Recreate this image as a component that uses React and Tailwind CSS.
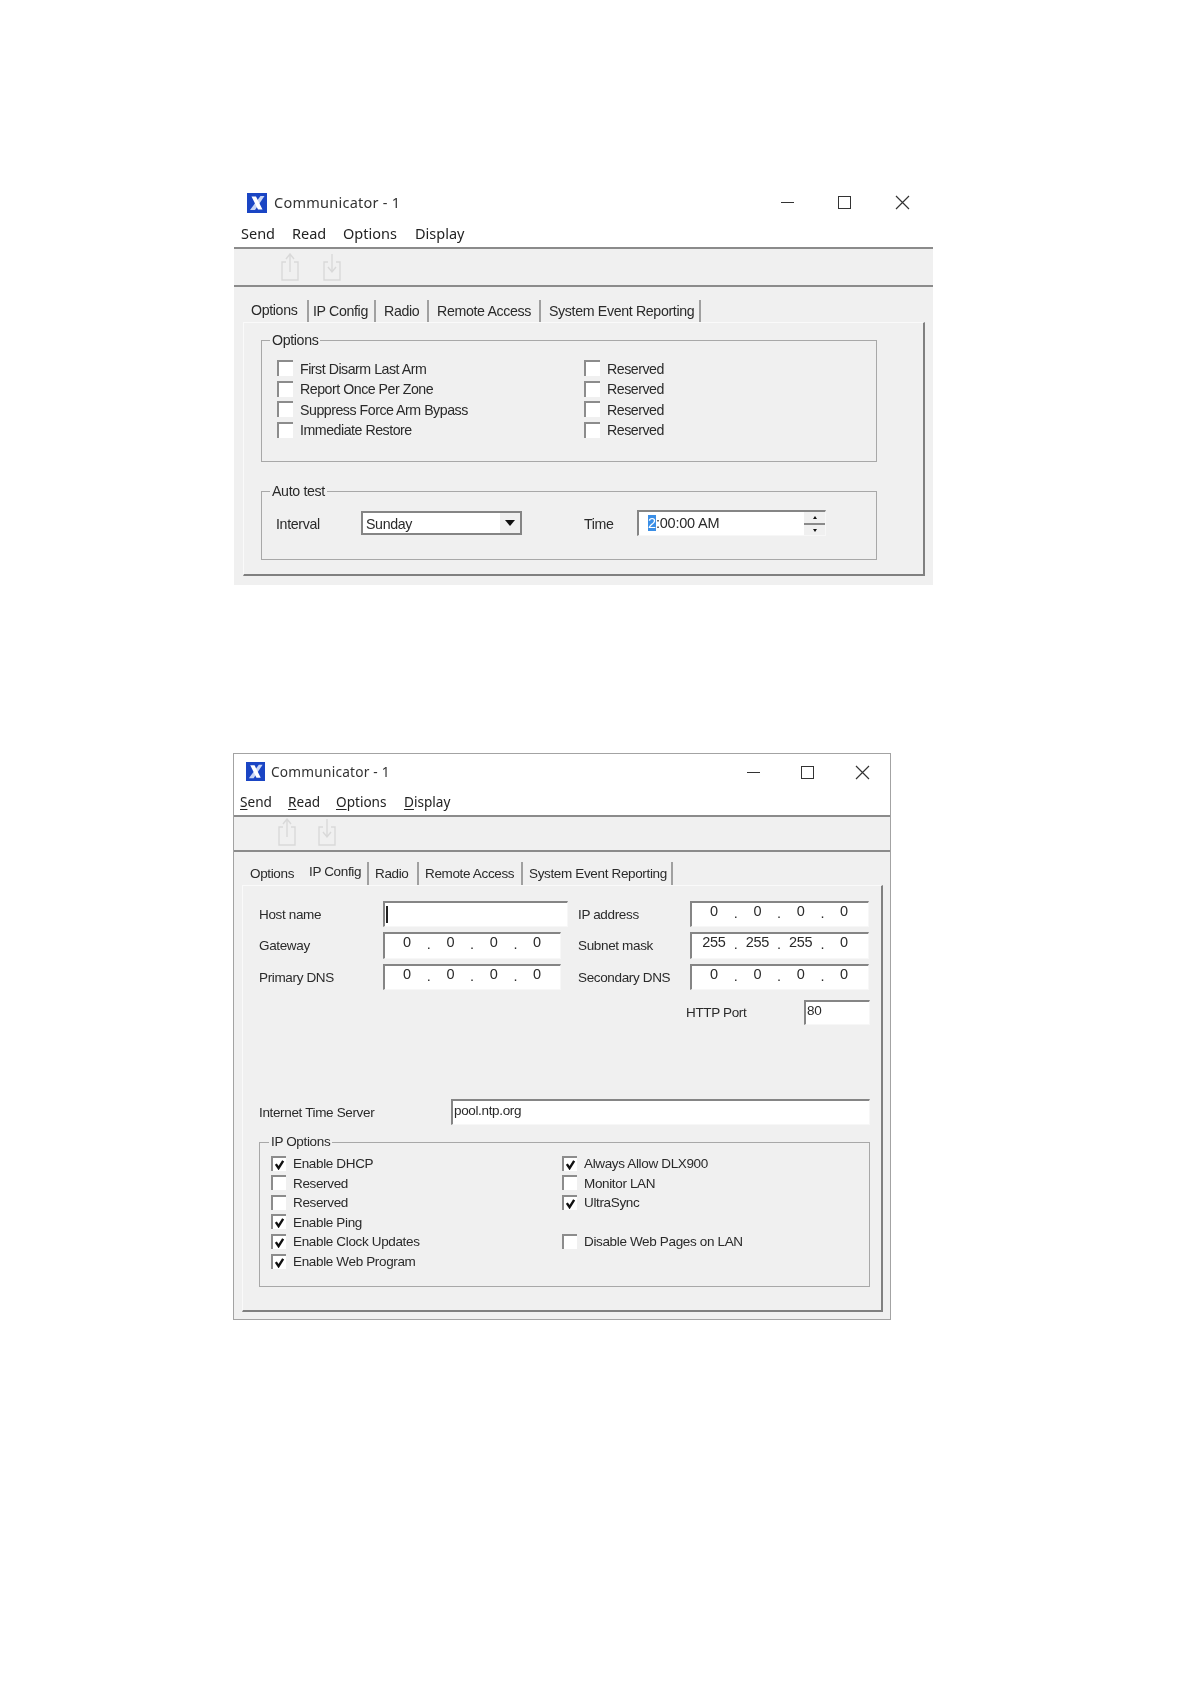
import React from "react";

const sans = "font-['Liberation_Sans',Arial,sans-serif]";
const ui = "font-['Noto_Sans','Open_Sans',sans-serif]";

function Logo({ size }) {
    return (
        <svg width={size} height={size} viewBox="0 0 20 20" className="shrink-0">
            <rect width="20" height="20" fill="#1a45c4" />
            <path d="M3 17 L13.5 3 L17.5 3 L8 17 Z" fill="#c9d6f5" />
            <path d="M4.5 3.5 L9 3.5 L15.5 16.5 L11 16.5 Z" fill="#ffffff" />
        </svg>
    );
}

function ToolIcon({ down }) {
    return (
        <svg width="20" height="28" viewBox="0 0 20 28" fill="none" stroke="#d9d9d9" strokeWidth="1.4">
            <path d="M6 9 H2 V27 H18 V9 H14" />
            {down ? <path d="M10 1 V18 M6 14 L10 19 L14 14" /> : <path d="M10 19 V2 M6 6 L10 1 L14 6" />}
        </svg>
    );
}

function WinButtons({ gaps }) {
    return (
        <div className={`flex items-center ${gaps}`}>
            <div className="w-[13px] h-[1px] bg-[#333]" />
            <div className="w-[13px] h-[13px] border-[1.5px] border-[#333]" />
            <svg width="15" height="15" viewBox="0 0 15 15" stroke="#333" strokeWidth="1.2"><path d="M1 1 L14 14 M14 1 L1 14" /></svg>
        </div>
    );
}

function Check({ label, checked, rowH, box = "w-[16px] h-[16px]", gap = "ml-[7px]" }) {
    return (
        <div className={`flex items-center text-[#2a2a2a] ${rowH}`}>
            <div className={`-mt-[2px] bg-white border-t-2 border-l-2 border-[#8c8c8c] flex items-center justify-center shrink-0 ${box}`}>
                {checked && (
                    <svg width="11" height="11" viewBox="0 0 12 12" fill="none" stroke="#111" strokeWidth="2.6"><path d="M2 5.5 L5 10 L10 2" /></svg>
                )}
            </div>
            <span className={`whitespace-nowrap ${gap}`}>{label}</span>
        </div>
    );
}

function Tab({ label, pl, w, raised, plain, top = "pt-[2px]" }) {
    return (
        <div className={`h-full flex items-start text-[#2a2a2a] whitespace-nowrap ${plain ? "" : "border-r-2 border-[#a0a0a0]"} ${pl} ${w} ${raised ? "pt-[0px]" : top}`}>
            {label}
        </div>
    );
}

function Sunken({ className, children }) {
    return <div className={`bg-white border-t-2 border-l-2 border-[#858585] border-r border-b border-r-[#f7f7f7] border-b-[#f7f7f7] ${className}`}>{children}</div>;
}

function IpField({ parts, w, h }) {
    return (
        <Sunken className={`flex items-start pl-[7px] text-[14.5px] leading-[17px] text-[#2a2a2a] ${w} ${h}`}>
            {parts.map((p, i) => (
                <React.Fragment key={i}>
                    <span className="w-[30px] text-center tracking-[-0.3px]">{p}</span>
                    {i < 3 && <span className="w-[13.3px] text-center leading-[20px]">.</span>}
                </React.Fragment>
            ))}
        </Sunken>
    );
}

function FirstWindow() {
    const left = ["First Disarm Last Arm", "Report Once Per Zone", "Suppress Force Arm Bypass", "Immediate Restore"];
    return (
        <div className={`w-[699px] ${sans} text-[14.2px] tracking-[-0.48px]`}>
            <div className={`h-[29px] flex items-center pl-[13px] pr-[23px] justify-between tracking-normal ${ui}`}>
                <div className="flex items-center">
                    <Logo size={20} />
                    <span className="ml-[7px] text-[14.5px] tracking-[0.25px] text-[#333]">Communicator - 1</span>
                </div>
                <WinButtons gaps="gap-[44px]" />
            </div>
            <div className={`h-[30px] pt-[4px] flex items-center pl-[7px] text-[14.5px] tracking-normal text-[#222] ${ui}`}>
                <span className="w-[51px]">Send</span>
                <span className="w-[51px]">Read</span>
                <span className="w-[72px]">Options</span>
                <span>Display</span>
            </div>
            <div className="h-[40px] bg-[#f0f0f0] border-t-2 border-b-2 border-[#8b8b8b] flex items-center pl-[46px] gap-[22px]">
                <ToolIcon />
                <ToolIcon down />
            </div>
            <div className="bg-[#f0f0f0] pl-[9px] pr-[8px] pb-[9px] tracking-[-0.35px]">
                <div className="h-[35px] pt-[13px] flex">
                    <Tab label="Options" pl="pl-[8px]" w="w-[66px]" raised />
                    <Tab label="IP Config" pl="pl-[4px]" w="w-[67px]" top="pt-[1px]" />
                    <Tab label="Radio" pl="pl-[8px]" w="w-[53px]" top="pt-[1px]" />
                    <Tab label="Remote Access" pl="pl-[8px]" w="w-[112px]" top="pt-[1px]" />
                    <Tab label="System Event Reporting" pl="pl-[8px]" w="w-[160px]" top="pt-[1px]" />
                </div>
                <div className="h-[254px] border-r-2 border-b-2 border-r-[#808080] border-b-[#808080] border-t border-l border-t-[#fafafa] border-l-[#fafafa] pl-[17px] pt-[7px] text-[#2a2a2a]">
                    <fieldset className="w-[616px] h-[132px] border border-[#a8a8a8]">
                        <legend className="ml-[8px] px-[2px]">Options</legend>
                        <div className="grid grid-cols-[307px_1fr] pl-[15px] pt-[8px] tracking-[-0.48px]">
                            {left.map((l) => (
                                <React.Fragment key={l}>
                                    <Check label={l} rowH="h-[20.4px]" />
                                    <Check label="Reserved" rowH="h-[20.4px]" />
                                </React.Fragment>
                            ))}
                        </div>
                    </fieldset>
                    <fieldset className="w-[616px] h-[79px] border border-[#a8a8a8] mt-[19px]">
                        <legend className="ml-[8px] px-[2px]">Auto test</legend>
                        <div className="flex items-center pl-[14px] pt-[8px]">
                            <span className="w-[85px] pt-[2px]">Interval</span>
                            <div className="w-[161px] h-[24px] bg-white border-2 border-[#858585] flex items-center justify-between pl-[3px]">
                                <span className="pt-[2px]">Sunday</span>
                                <div className="w-[20px] h-full bg-[#f0f0f0] flex items-center justify-center">
                                    <div className="w-0 h-0 border-l-[5px] border-r-[5px] border-t-[6px] border-l-transparent border-r-transparent border-t-[#111]" />
                                </div>
                            </div>
                            <span className="ml-[62px] w-[53px] pt-[2px]">Time</span>
                            <Sunken className="w-[189px] h-[26px] flex items-center justify-between pl-[9px]">
                                <span className="text-[14.5px] tracking-[-0.2px]"><span className="bg-[#3a8ee6] text-white">2</span>:00:00 AM</span>
                                <div className="w-[21px] h-full flex flex-col bg-[#f0f0f0]">
                                    <div className="flex-1 flex items-center justify-center border-b-2 border-[#8a8a8a]"><div className="w-0 h-0 border-l-[2.5px] border-r-[2.5px] border-b-[3px] border-l-transparent border-r-transparent border-b-[#111]" /></div>
                                    <div className="flex-1 flex items-center justify-center"><div className="w-0 h-0 border-l-[2.5px] border-r-[2.5px] border-t-[3px] border-l-transparent border-r-transparent border-t-[#111]" /></div>
                                </div>
                            </Sunken>
                        </div>
                    </fieldset>
                </div>
            </div>
        </div>
    );
}

function Hotkey({ k, rest, w }) {
    return <span className={w}><span className="underline underline-offset-2">{k}</span>{rest}</span>;
}

function FormRow({ label, lw, children, mt }) {
    return (
        <div className={`flex items-center ${mt}`}>
            <span className={`pt-[2px] ${lw}`}>{label}</span>
            {children}
        </div>
    );
}

function SecondWindow() {
    const rows = [
        ["Enable DHCP", true, "Always Allow DLX900", true],
        ["Reserved", false, "Monitor LAN", false],
        ["Reserved", false, "UltraSync", true],
        ["Enable Ping", true, null, false],
        ["Enable Clock Updates", true, "Disable Web Pages on LAN", false],
        ["Enable Web Program", true, null, false],
    ];
    const box = "w-[15px] h-[15px]";
    return (
        <div className={`w-[658px] h-[567px] border border-[#a3a3a3] ${sans} text-[13.5px] tracking-[-0.35px]`}>
            <div className={`h-[33px] pt-[3px] flex items-center pl-[12px] pr-[20px] justify-between tracking-normal ${ui}`}>
                <div className="flex items-center">
                    <Logo size={19} />
                    <span className="ml-[6px] text-[13.7px] tracking-[0.2px] text-[#333]">Communicator - 1</span>
                </div>
                <WinButtons gaps="gap-[41px]" />
            </div>
            <div className={`h-[28px] pt-[2px] flex items-center pl-[6px] text-[13.6px] tracking-normal text-[#222] ${ui}`}>
                <Hotkey k="S" rest="end" w="w-[48px]" />
                <Hotkey k="R" rest="ead" w="w-[48px]" />
                <Hotkey k="O" rest="ptions" w="w-[68px]" />
                <Hotkey k="D" rest="isplay" />
            </div>
            <div className="h-[37px] bg-[#f0f0f0] border-t-2 border-b-2 border-[#8b8b8b] flex items-center pb-[3px] pl-[43px] gap-[20px]">
                <ToolIcon />
                <ToolIcon down />
            </div>
            <div className="h-[467px] bg-[#f0f0f0] pl-[8px] pr-[7px] pb-[7px] flex flex-col">
                <div className="h-[33px] pt-[10px] flex">
                    <Tab label="Options" pl="pl-[8px]" w="w-[59px]" plain />
                    <Tab label="IP Config" pl="pl-[8px]" w="w-[68px]" raised />
                    <Tab label="Radio" pl="pl-[6px]" w="w-[50px]" />
                    <Tab label="Remote Access" pl="pl-[6px]" w="w-[104px]" />
                    <Tab label="System Event Reporting" pl="pl-[6px]" w="w-[150px]" />
                </div>
                <div className="flex-1 border-r-2 border-b-2 border-r-[#808080] border-b-[#808080] border-t border-l border-t-[#fafafa] border-l-[#fafafa] pl-[16px] pt-[15px] text-[#2a2a2a]">
                    <div className="grid grid-cols-[319px_1fr] gap-y-[5px] items-center">
                        <FormRow label="Host name" lw="w-[124px]">
                            <Sunken className="w-[185px] h-[26px] flex items-center pl-[1px]"><div className="w-[1.5px] h-[17px] bg-[#222]" /></Sunken>
                        </FormRow>
                        <FormRow label="IP address" lw="w-[112px]"><IpField parts={["0", "0", "0", "0"]} w="w-[179px]" h="h-[26px]" /></FormRow>
                        <FormRow label="Gateway" lw="w-[124px]"><IpField parts={["0", "0", "0", "0"]} w="w-[178px]" h="h-[27px]" /></FormRow>
                        <FormRow label="Subnet mask" lw="w-[112px]"><IpField parts={["255", "255", "255", "0"]} w="w-[179px]" h="h-[27px]" /></FormRow>
                        <FormRow label="Primary DNS" lw="w-[124px]"><IpField parts={["0", "0", "0", "0"]} w="w-[178px]" h="h-[26px]" /></FormRow>
                        <FormRow label="Secondary DNS" lw="w-[112px]"><IpField parts={["0", "0", "0", "0"]} w="w-[179px]" h="h-[26px]" /></FormRow>
                    </div>
                    <div className="flex items-center mt-[10px] pl-[427px]">
                        <span className="w-[118px] pt-[2px]">HTTP Port</span>
                        <Sunken className="w-[66px] h-[25px] pl-[1px] leading-[18px]">80</Sunken>
                    </div>
                    <FormRow label="Internet Time Server" lw="w-[192px]" mt="mt-[74px]">
                        <Sunken className="w-[419px] h-[26px] pl-[1px] leading-[20px]">pool.ntp.org</Sunken>
                    </FormRow>
                    <fieldset className="w-[611px] h-[155px] border border-[#a8a8a8] mt-[7px]">
                        <legend className="ml-[9px] px-[2px]">IP Options</legend>
                        <div className="grid grid-cols-[291px_1fr] pl-[11px] pt-[2px]">
                            {rows.map(([a, ac, b, bc], i) => (
                                <React.Fragment key={i}>
                                    <Check label={a} checked={ac} rowH="h-[19.6px]" box={box} />
                                    {b ? <Check label={b} checked={bc} rowH="h-[19.6px]" box={box} /> : <div />}
                                </React.Fragment>
                            ))}
                        </div>
                    </fieldset>
                </div>
            </div>
        </div>
    );
}

export default function App() {
    return (
        <div className="min-h-[1683px] bg-white pl-[233px] pt-[188px]">
            <div className="blur-[0.4px]">
                <div className="ml-[1px]">
                    <FirstWindow />
                </div>
                <div className="mt-[168px]">
                    <SecondWindow />
                </div>
            </div>
        </div>
    );
}
